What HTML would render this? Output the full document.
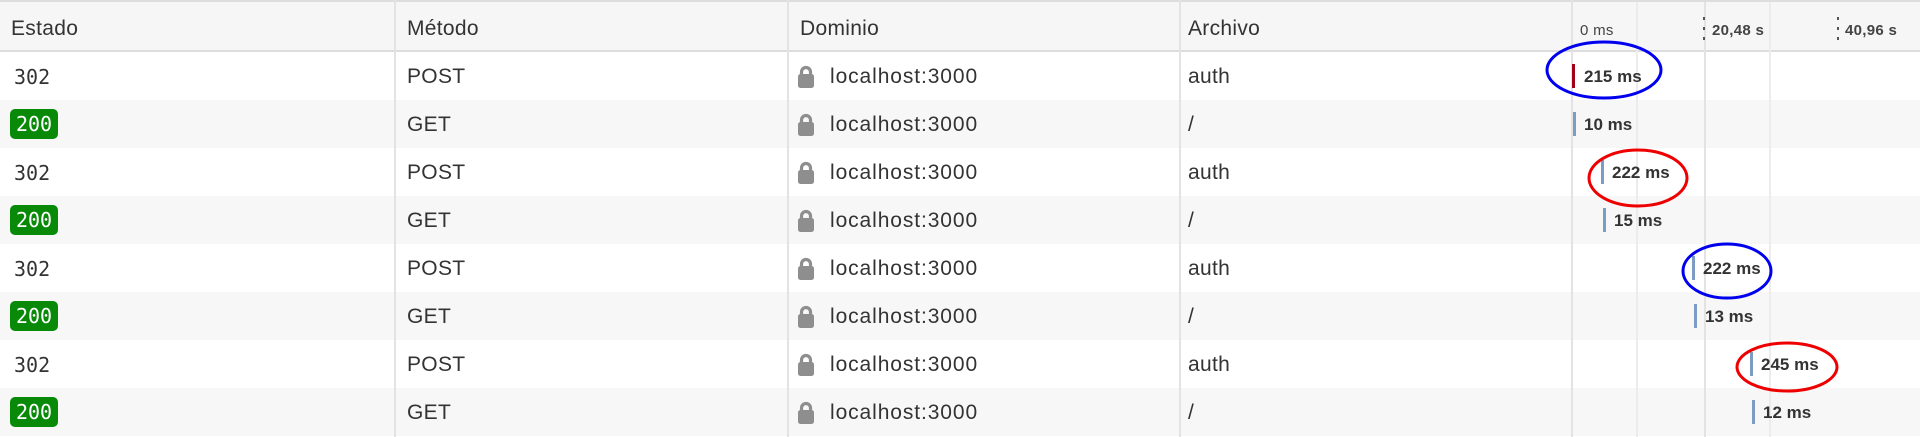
<!DOCTYPE html>
<html><head><meta charset="utf-8"><style>
*{margin:0;padding:0;box-sizing:border-box}
body{width:1920px;height:437px;overflow:hidden;background:#fff;font-family:"Liberation Sans",sans-serif;color:#333;position:relative}
.a{position:absolute}
.hdr{left:0;top:0;width:1920px;height:52px;background:#f6f6f6;border-top:2px solid #ddd;border-bottom:2px solid #ddd}
.row{left:0;width:1920px;height:48px}
.t{position:absolute;font-size:21px;line-height:24px;white-space:nowrap;letter-spacing:0.3px}
.vl{position:absolute;top:0;width:2px;height:437px;background:#e3e3e3}
.gl{position:absolute;top:2px;width:2px;height:435px;background:#ececec}
.mono{font-family:"DejaVu Sans Mono","Liberation Mono",monospace;font-size:20px;letter-spacing:0}
.badge{position:absolute;left:10px;width:48px;height:30px;background:#088a08;border-radius:5px;color:#fff;text-align:center;line-height:30px}
.bar{position:absolute;width:3px;height:24px;background:#7c9cc4}
.ms{position:absolute;font-size:17px;font-weight:bold;line-height:24px;color:#333;white-space:nowrap}
.lock{position:absolute;left:798px;width:16px;height:25px}
.dom{letter-spacing:0.9px}
</style></head><body>
<div class="a hdr"></div>
<div class="a row" style="top:52px;background:#fff"></div>
<div class="a row" style="top:100px;background:#f7f7f7"></div>
<div class="a row" style="top:148px;background:#fff"></div>
<div class="a row" style="top:196px;background:#f7f7f7"></div>
<div class="a row" style="top:244px;background:#fff"></div>
<div class="a row" style="top:292px;background:#f7f7f7"></div>
<div class="a row" style="top:340px;background:#fff"></div>
<div class="a row" style="top:388px;background:#f7f7f7"></div>
<div class="gl" style="left:1636px"></div>
<div class="gl" style="left:1704px;background:#e3e3e3"></div>
<div class="gl" style="left:1769px"></div>
<div class="vl" style="left:394px"></div>
<div class="vl" style="left:787px"></div>
<div class="vl" style="left:1179px"></div>
<div class="vl" style="left:1571px"></div>
<div class="a" style="left:1703px;top:17px;width:2px;height:24px;background:repeating-linear-gradient(#555 0 3px,transparent 3px 10px)"></div>
<div class="a" style="left:1837px;top:17px;width:2px;height:24px;background:repeating-linear-gradient(#555 0 3px,transparent 3px 10px)"></div>
<div class="t" style="left:11px;top:17px">Estado</div>
<div class="t" style="left:407px;top:17px">Método</div>
<div class="t" style="left:800px;top:17px">Dominio</div>
<div class="t" style="left:1188px;top:17px">Archivo</div>
<div class="t" style="left:1580px;top:19px;font-size:15px;color:#444">0 ms</div>
<div class="t" style="left:1712px;top:19px;font-size:15px;font-weight:bold;color:#444">20,48 s</div>
<div class="t" style="left:1845px;top:19px;font-size:15px;font-weight:bold;color:#444">40,96 s</div>

<div class="t mono" style="left:14px;top:65px">302</div>
<div class="badge mono" style="top:109px">200</div>
<div class="t mono" style="left:14px;top:161px">302</div>
<div class="badge mono" style="top:205px">200</div>
<div class="t mono" style="left:14px;top:257px">302</div>
<div class="badge mono" style="top:301px">200</div>
<div class="t mono" style="left:14px;top:353px">302</div>
<div class="badge mono" style="top:397px">200</div>

<div class="t" style="left:407px;top:65px">POST</div>
<div class="t" style="left:407px;top:113px">GET</div>
<div class="t" style="left:407px;top:161px">POST</div>
<div class="t" style="left:407px;top:209px">GET</div>
<div class="t" style="left:407px;top:257px">POST</div>
<div class="t" style="left:407px;top:305px">GET</div>
<div class="t" style="left:407px;top:353px">POST</div>
<div class="t" style="left:407px;top:401px">GET</div>

<svg width="0" height="0" style="position:absolute"><defs><symbol id="lk" viewBox="0 0 16 25"><path d="M3.5 12V8a4.5 4.5 0 0 1 9 0V12" fill="none" stroke="#8e8e8e" stroke-width="3.2"/><rect x="0" y="10" width="16" height="14" rx="2.5" fill="#8e8e8e"/></symbol></defs></svg>
<svg class="lock" style="top:64px"><use href="#lk"/></svg>
<svg class="lock" style="top:112px"><use href="#lk"/></svg>
<svg class="lock" style="top:160px"><use href="#lk"/></svg>
<svg class="lock" style="top:208px"><use href="#lk"/></svg>
<svg class="lock" style="top:256px"><use href="#lk"/></svg>
<svg class="lock" style="top:304px"><use href="#lk"/></svg>
<svg class="lock" style="top:352px"><use href="#lk"/></svg>
<svg class="lock" style="top:400px"><use href="#lk"/></svg>
<div class="t dom" style="left:830px;top:65px">localhost:3000</div>
<div class="t dom" style="left:830px;top:113px">localhost:3000</div>
<div class="t dom" style="left:830px;top:161px">localhost:3000</div>
<div class="t dom" style="left:830px;top:209px">localhost:3000</div>
<div class="t dom" style="left:830px;top:257px">localhost:3000</div>
<div class="t dom" style="left:830px;top:305px">localhost:3000</div>
<div class="t dom" style="left:830px;top:353px">localhost:3000</div>
<div class="t dom" style="left:830px;top:401px">localhost:3000</div>

<div class="t" style="left:1188px;top:65px">auth</div>
<div class="t" style="left:1188px;top:113px">/</div>
<div class="t" style="left:1188px;top:161px">auth</div>
<div class="t" style="left:1188px;top:209px">/</div>
<div class="t" style="left:1188px;top:257px">auth</div>
<div class="t" style="left:1188px;top:305px">/</div>
<div class="t" style="left:1188px;top:353px">auth</div>
<div class="t" style="left:1188px;top:401px">/</div>

<div class="bar" style="left:1572px;top:64px;background:#a00018"></div><div class="ms" style="left:1584px;top:65px">215 ms</div>
<div class="bar" style="left:1573px;top:112px"></div><div class="ms" style="left:1584px;top:113px">10 ms</div>
<div class="bar" style="left:1601px;top:160px"></div><div class="ms" style="left:1612px;top:161px">222 ms</div>
<div class="bar" style="left:1603px;top:208px"></div><div class="ms" style="left:1614px;top:209px">15 ms</div>
<div class="bar" style="left:1692px;top:256px"></div><div class="ms" style="left:1703px;top:257px">222 ms</div>
<div class="bar" style="left:1694px;top:304px"></div><div class="ms" style="left:1705px;top:305px">13 ms</div>
<div class="bar" style="left:1750px;top:352px"></div><div class="ms" style="left:1761px;top:353px">245 ms</div>
<div class="bar" style="left:1752px;top:400px"></div><div class="ms" style="left:1763px;top:401px">12 ms</div>

<svg class="a" style="left:0;top:0" width="1920" height="437">
<g fill="none" stroke-width="3">
<ellipse cx="1604" cy="70" rx="57" ry="28" stroke="#0000ee"/>
<ellipse cx="1638" cy="178" rx="49" ry="28" stroke="#ee0000"/>
<ellipse cx="1727" cy="271" rx="44" ry="27" stroke="#0000ee"/>
<ellipse cx="1787" cy="367" rx="50" ry="24" stroke="#ee0000"/>
</g></svg>
</body></html>
